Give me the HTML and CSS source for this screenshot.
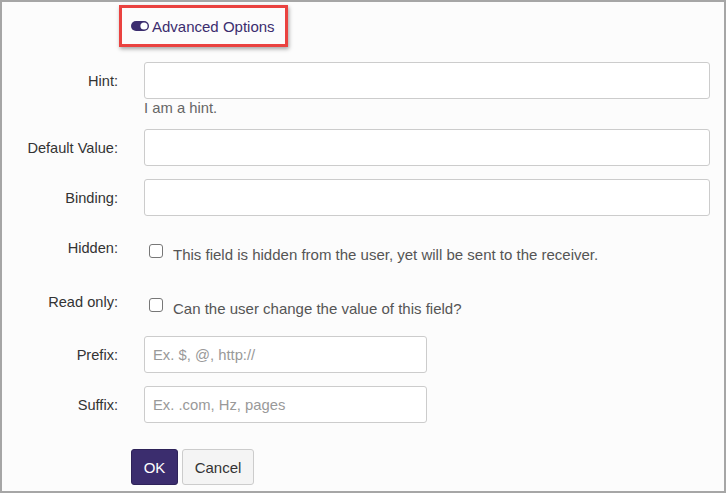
FILE: index.html
```html
<!DOCTYPE html>
<html>
<head>
<meta charset="utf-8">
<link rel="stylesheet" href="styles.css">
</head>
<body>
<div class="frame">
  <div class="adv-row">
    <div class="adv-box">
      <svg class="toggle" width="18" height="10" viewBox="0 0 18 10"><rect x="0" y="0" width="18" height="10" rx="5" fill="#3b2d6e"/><circle cx="13" cy="5" r="3.6" fill="#fff"/></svg>
      <span class="adv-text">Advanced Options</span>
    </div>
  </div>
  <div class="form">
    <div class="row">
      <label class="lbl">Hint:</label>
      <div class="ctl">
        <input class="inp" type="text">
        <div class="hint">I am a hint.</div>
      </div>
    </div>
    <div class="row">
      <label class="lbl">Default Value:</label>
      <div class="ctl"><input class="inp" type="text"></div>
    </div>
    <div class="row">
      <label class="lbl">Binding:</label>
      <div class="ctl"><input class="inp" type="text"></div>
    </div>
    <div class="row row-check">
      <label class="lbl">Hidden:</label>
      <div class="ctl check"><span class="cb"></span><span class="cb-text">This field is hidden from the user, yet will be sent to the receiver.</span></div>
    </div>
    <div class="row row-check">
      <label class="lbl">Read only:</label>
      <div class="ctl check"><span class="cb"></span><span class="cb-text">Can the user change the value of this field?</span></div>
    </div>
    <div class="row">
      <label class="lbl">Prefix:</label>
      <div class="ctl"><input class="inp short" type="text" placeholder="Ex. $, @, http://"></div>
    </div>
    <div class="row">
      <label class="lbl">Suffix:</label>
      <div class="ctl"><input class="inp short" type="text" placeholder="Ex. .com, Hz, pages"></div>
    </div>
  </div>
  <div class="buttons">
    <button class="btn ok">OK</button>
    <button class="btn cancel">Cancel</button>
  </div>
</div>
</body>
</html>
```
FILE: styles.css
```css
* { box-sizing: border-box; }
html, body { margin: 0; padding: 0; }
body { font-family: "Liberation Sans", Arial, sans-serif; background: #a6a6a6; }
.frame {
  width: 726px;
  height: 493px;
  border: 2px solid #a6a6a6;
  background: #fcfcfc;
  overflow: hidden;
}
.adv-row { padding-left: 117px; padding-top: 3px; }
.adv-box {
  display: inline-flex;
  align-items: center;
  width: 169px;
  height: 42px;
  border: 3px solid #ea4240;
  box-shadow: 1px 2px 4px rgba(0,0,0,0.35);
  padding-left: 9px;
  padding-top: 0;
}
.toggle { display: block; margin-right: 3px; }
.adv-text { font-size: 15px; color: #3b2d6e; }
.form { margin-top: 15px; padding-right: 14px; }
.row {
  display: grid;
  grid-template-columns: 116px 1fr;
  column-gap: 26px;
  margin-bottom: 13px;
}
.lbl {
  text-align: right;
  font-size: 14.6px;
  line-height: 20px;
  color: #333;
  padding-top: 9px;
}
.inp {
  display: block;
  width: 100%;
  height: 37px;
  border: 1px solid #ccc;
  border-radius: 3px;
  background: #fff;
  padding: 0 8px;
  font-family: inherit;
  font-size: 14.8px;
  color: #333;
}
.inp::placeholder { color: #999; }
.inp.short { width: 283px; }
.hint { font-size: 14.8px; color: #666; line-height: 16px; margin-top: 1px; }
.row-check { height: 40.5px; }
.check { display: flex; align-items: flex-start; padding-top: 14px; padding-left: 5px; }
.cb {
  width: 14px;
  height: 14px;
  border: 1.5px solid #777;
  border-radius: 3px;
  background: #fff;
  flex: none;
  margin-top: 1px;
}
.cb-text { font-size: 15px; color: #555; line-height: 18px; margin-left: 10px; margin-top: 3px; }
.buttons { display: flex; gap: 4px; padding-left: 129px; margin-top: 26px; }
.btn {
  height: 36px;
  border-radius: 3px;
  font-family: inherit;
  font-size: 15px;
  padding: 0;
}
.ok { width: 47px; background: #3b2d6e; border: 1px solid #2e2359; color: #fff; }
.cancel { width: 72px; background: #f4f4f4; border: 1px solid #ccc; color: #333; }
```
